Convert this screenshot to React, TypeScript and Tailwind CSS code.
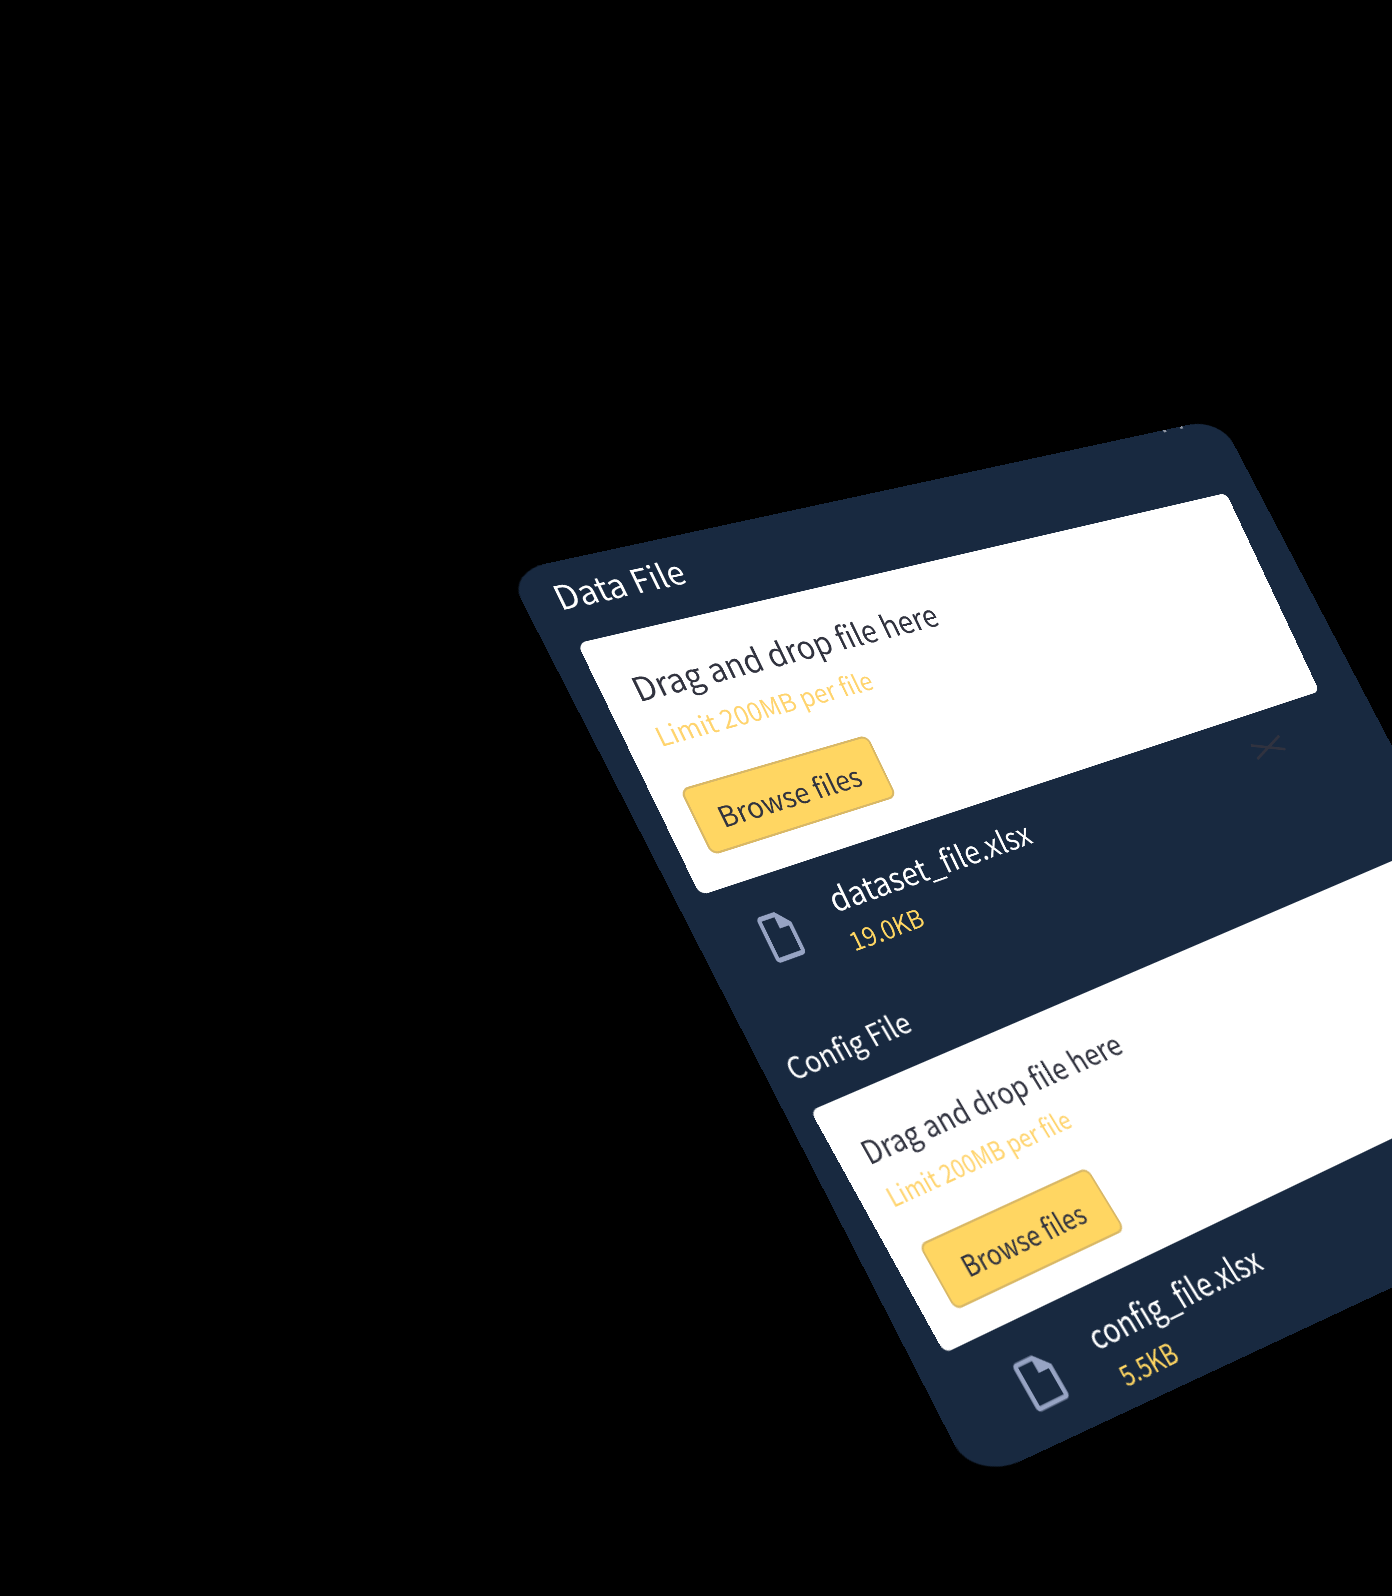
import React from "react";

type Point = [number, number];
type Quad = [Point, Point, Point, Point];

/** Perspective matrix that lays a w x h box onto four corners (clockwise from top left). */
function perspectiveTo(w: number, h: number, [a, b, c, d]: Quad): string {
  const dx1 = b[0] - c[0];
  const dx2 = d[0] - c[0];
  const dy1 = b[1] - c[1];
  const dy2 = d[1] - c[1];
  const sx = a[0] - b[0] + c[0] - d[0];
  const sy = a[1] - b[1] + c[1] - d[1];
  const det = dx1 * dy2 - dx2 * dy1;
  const g = (sx * dy2 - dx2 * sy) / det;
  const k = (dx1 * sy - sx * dy1) / det;
  const m = [
    (b[0] - a[0] + g * b[0]) / w, (b[1] - a[1] + g * b[1]) / w, 0, g / w,
    (d[0] - a[0] + k * d[0]) / h, (d[1] - a[1] + k * d[1]) / h, 0, k / h,
    0, 0, 1, 0,
    a[0], a[1], 0, 1,
  ];
  return `matrix3d(${m.join(",")})`;
}

const PANEL: Quad = [[507, 572], [1220, 418], [1620, 1181], [974, 1483]];
const DATA_PLANE: Quad = [[540, 567], [1198, 433], [1361, 780], [755, 1008]];
const CONFIG_PLANE: Quad = [[773, 1043], [1343, 806], [1609, 1169], [1010, 1472]];

function FileIcon({ className }: { className: string }) {
  return (
    <svg viewBox="0 0 24 24" preserveAspectRatio="none" aria-hidden="true" className={className}>
      <path d="M14 2H6c-1.1 0-1.99.9-1.99 2L4 20c0 1.1.89 2 1.99 2H18c1.1 0 2-.9 2-2V8l-6-6zM6 20V4h7v5h5v11H6z" />
    </svg>
  );
}

interface UploaderProps {
  id: string;
  label: string;
  fileName: string;
  fileSize: string;
  plane: Quad;
  zoneClass: string;
  buttonClass: string;
  rowClass: string;
  iconClass: string;
  sizeClass: string;
}

function Uploader(p: UploaderProps) {
  return (
    <section
      aria-labelledby={p.id}
      className="h-[420px] w-[760px] origin-top-left pt-2 text-[30px] [grid-area:1/1]"
      style={{ transform: perspectiveTo(760, 420, p.plane) }}
    >
      <h2 id={p.id} className="mb-6 leading-10 text-white">
        {p.label}
      </h2>
      <div className={`h-[240px] rounded-lg bg-white px-6 text-[#31333f] ${p.zoneClass}`}>
        <p className="pl-1 leading-[44px]">Drag and drop file here</p>
        <p className="pl-1 text-2xl leading-[48px] text-[#ffd46e]">Limit 200MB per file</p>
        <button
          type="button"
          className={`h-16 rounded-lg border-2 border-[#d9b866] bg-[#ffd662] text-[26px] ${p.buttonClass}`}
        >
          Browse files
        </button>
      </div>
      <div className={`flex pt-5 ${p.rowClass}`}>
        <FileIcon className={`h-[53px] fill-[#97a4c4] ${p.iconClass}`} />
        <div className="grow">
          <p className="leading-10 text-white">{p.fileName}</p>
          <p className={`text-2xl text-[#ffd662] ${p.sizeClass}`}>{p.fileSize}</p>
        </div>
        <button type="button" aria-label={`Remove ${p.fileName}`} className="mr-20 mt-[11px] h-[18px]">
          <svg viewBox="0 0 44 18" className="h-[18px] w-11 stroke-[#30323f] stroke-3">
            <path d="M1 1L43 17M43 1L1 17" />
          </svg>
        </button>
      </div>
    </section>
  );
}

export default function App() {
  return (
    <main className="grid min-h-screen grid-cols-[0px] grid-rows-[0px] overflow-hidden bg-black [font-family:'Noto_Sans_CJK_SC','Noto_Sans',sans-serif]">
      <div
        className="flex h-[1060px] w-[704px] origin-top-left justify-end gap-4 rounded-tl-[32px] rounded-tr-[36px] rounded-br-[44px] rounded-bl-[44px] bg-[#182940] pr-11 [grid-area:1/1]"
        style={{ transform: perspectiveTo(704, 1060, PANEL) }}
      >
        <span className="h-[3px] w-[3px] bg-[#8f96a3]" />
        <span className="h-[3px] w-[3px] bg-[#8f96a3]" />
      </div>
      <Uploader
        id="data-file"
        label="Data File"
        fileName="dataset_file.xlsx"
        fileSize="19.0KB"
        plane={DATA_PLANE}
        zoneClass="pt-7"
        buttonClass="ml-[2px] mt-[26px] pr-6 pl-5"
        rowClass="pl-[30px]"
        iconClass="mt-[10px] mr-9 w-11"
        sizeClass="leading-[44px]"
      />
      <Uploader
        id="config-file"
        label="Config File"
        fileName="config_file.xlsx"
        fileSize="5.5KB"
        plane={CONFIG_PLANE}
        zoneClass="-mr-12 pt-8"
        buttonClass="ml-2 mt-6 px-7"
        rowClass="pl-[46px]"
        iconClass="mt-2 mr-10 w-14"
        sizeClass="pl-2 leading-10"
      />
    </main>
  );
}
